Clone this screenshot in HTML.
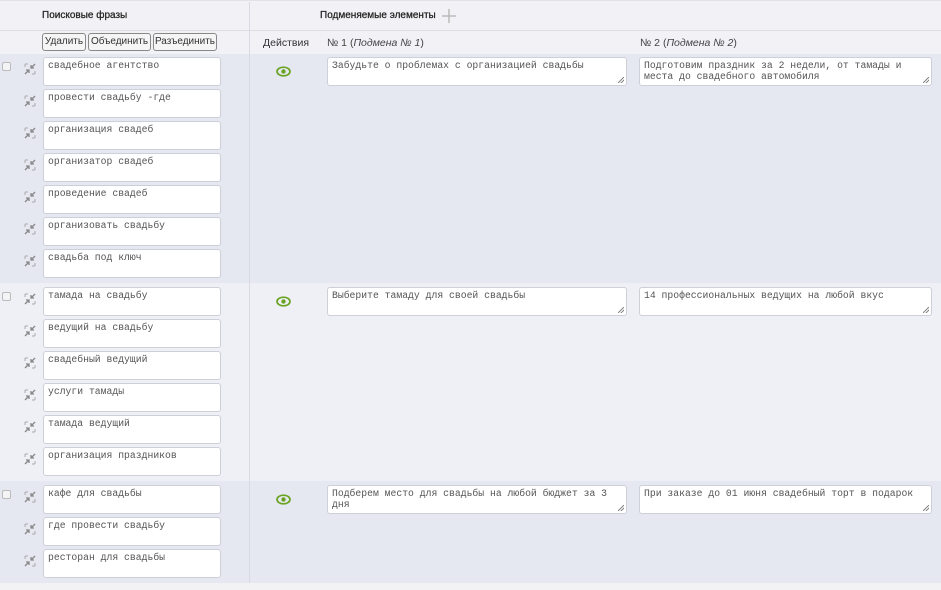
<!DOCTYPE html>
<html><head><meta charset="utf-8"><style>
*{box-sizing:border-box;margin:0;padding:0}
body{width:941px;height:590px;background:#f2f2f5;font-family:"Liberation Sans",sans-serif;position:relative;overflow:hidden;color:#333}
.a{position:absolute}
.hdr{left:0;top:0;width:941px;height:54px;background:#f2f2f6;border-top:1px solid #e2e3ea}
.line{background:#dcdde5}
.g{left:0;width:941px}
.ta{position:absolute;background:#fff;border:1px solid #cdd0d9;border-radius:3px;font-family:"Liberation Mono",monospace;font-size:9.75px;line-height:11px;color:#555;padding:2px 4px;white-space:pre-wrap;overflow:hidden}
.ta.r::after{content:"";position:absolute;right:2px;bottom:2px;width:6px;height:6px;background:linear-gradient(135deg,transparent 45%,#888 45%,#888 55%,transparent 55%,transparent 70%,#888 70%,#888 80%,transparent 80%)}
.cb{position:absolute;left:2px;width:9px;height:9px;border:1px solid #bbb;border-radius:2px;background:#f4f4f6}
.ic{position:absolute;left:24px;width:12px;height:12px}
.btn{position:absolute;top:33px;height:18px;border:1px solid #888;border-radius:3px;background:#f5f5f5;font-size:10px;line-height:16px;text-align:center;color:#333;white-space:nowrap;overflow:hidden}
.eye{position:absolute;left:276px;width:15px;height:11px}
.t{position:absolute;font-size:10.5px;white-space:nowrap}
</style></head><body>
<div class="a hdr"></div>
<div class="a line" style="left:0;top:30px;width:941px;height:1px"></div>
<div class="t" style="left:42px;top:10px;font-size:10px;color:#222;-webkit-text-stroke:0.25px #222">Поисковые фразы</div>
<div class="t" style="left:320px;top:10px;font-size:10px;color:#222;-webkit-text-stroke:0.25px #222">Подменяемые элементы</div>
<svg class="a" style="left:442px;top:9px" width="14" height="14"><path d="M7 0V14M0 7H14" stroke="#bbb" stroke-width="1.5"/></svg>
<div class="btn" style="left:42px;width:44px">Удалить</div>
<div class="btn" style="left:88px;width:63px">Объединить</div>
<div class="btn" style="left:153px;width:64px">Разъединить</div>
<div class="t" style="left:263px;top:37px">Действия</div>
<div class="t" style="left:327px;top:37px;color:#444">№ 1 (<i>Подмена № 1</i>)</div>
<div class="t" style="left:640px;top:37px;color:#444">№ 2 (<i>Подмена № 2</i>)</div>

<div class="a g" style="top:54px;height:229px;background:#e5e8f1"></div>
<div class="a g" style="top:283px;height:198px;background:#eff0f5"></div>
<div class="a g" style="top:481px;height:102px;background:#e5e8f1"></div>
<div class="a line" style="left:249px;top:2px;width:1px;height:581px;background:#d8dae3"></div>

<div class="cb" style="top:62px"></div><div class="cb" style="top:292px"></div><div class="cb" style="top:490px"></div>

<svg width="0" height="0" style="position:absolute"><defs><g id="m"><path d="M1 11L5 7M2 7H5V10M11 1L7 5M7 2V5H10" stroke="#888" stroke-width="1.3" fill="none"/><path d="M1 1H4M1 1V4M11 11H8M11 11V8" stroke="#aaa" stroke-width="1" fill="none"/></g>
<g id="e"><ellipse cx="7.5" cy="5.5" rx="6.5" ry="4.3" fill="none" stroke="#6aa322" stroke-width="1.7"/><circle cx="7.5" cy="5.5" r="2.2" fill="#6aa322"/></g></defs></svg>

<div class="ta" style="left:43px;top:57px;width:178px;height:29px">свадебное агентство</div>
<div class="ta" style="left:43px;top:89px;width:178px;height:29px">провести свадьбу -где</div>
<div class="ta" style="left:43px;top:121px;width:178px;height:29px">организация свадеб</div>
<div class="ta" style="left:43px;top:153px;width:178px;height:29px">организатор свадеб</div>
<div class="ta" style="left:43px;top:185px;width:178px;height:29px">проведение свадеб</div>
<div class="ta" style="left:43px;top:217px;width:178px;height:29px">организовать свадьбу</div>
<div class="ta" style="left:43px;top:249px;width:178px;height:29px">свадьба под ключ</div>
<div class="ta" style="left:43px;top:287px;width:178px;height:29px">тамада на свадьбу</div>
<div class="ta" style="left:43px;top:319px;width:178px;height:29px">ведущий на свадьбу</div>
<div class="ta" style="left:43px;top:351px;width:178px;height:29px">свадебный ведущий</div>
<div class="ta" style="left:43px;top:383px;width:178px;height:29px">услуги тамады</div>
<div class="ta" style="left:43px;top:415px;width:178px;height:29px">тамада ведущий</div>
<div class="ta" style="left:43px;top:447px;width:178px;height:29px">организация праздников</div>
<div class="ta" style="left:43px;top:485px;width:178px;height:29px">кафе для свадьбы</div>
<div class="ta" style="left:43px;top:517px;width:178px;height:29px">где провести свадьбу</div>
<div class="ta" style="left:43px;top:549px;width:178px;height:29px">ресторан для свадьбы</div>

<svg class="ic" style="top:63px"><use href="#m"/></svg>
<svg class="ic" style="top:95px"><use href="#m"/></svg>
<svg class="ic" style="top:127px"><use href="#m"/></svg>
<svg class="ic" style="top:159px"><use href="#m"/></svg>
<svg class="ic" style="top:191px"><use href="#m"/></svg>
<svg class="ic" style="top:223px"><use href="#m"/></svg>
<svg class="ic" style="top:255px"><use href="#m"/></svg>
<svg class="ic" style="top:293px"><use href="#m"/></svg>
<svg class="ic" style="top:325px"><use href="#m"/></svg>
<svg class="ic" style="top:357px"><use href="#m"/></svg>
<svg class="ic" style="top:389px"><use href="#m"/></svg>
<svg class="ic" style="top:421px"><use href="#m"/></svg>
<svg class="ic" style="top:453px"><use href="#m"/></svg>
<svg class="ic" style="top:491px"><use href="#m"/></svg>
<svg class="ic" style="top:523px"><use href="#m"/></svg>
<svg class="ic" style="top:555px"><use href="#m"/></svg>

<svg class="eye" style="top:66px"><use href="#e"/></svg>
<svg class="eye" style="top:296px"><use href="#e"/></svg>
<svg class="eye" style="top:494px"><use href="#e"/></svg>

<div class="ta r" style="left:327px;top:57px;width:300px;height:29px">Забудьте о проблемах с организацией свадьбы</div>
<div class="ta r" style="left:639px;top:57px;width:293px;height:29px">Подготовим праздник за 2 недели, от тамады и места до свадебного автомобиля</div>
<div class="ta r" style="left:327px;top:287px;width:300px;height:29px">Выберите тамаду для своей свадьбы</div>
<div class="ta r" style="left:639px;top:287px;width:293px;height:29px">14 профессиональных ведущих на любой вкус</div>
<div class="ta r" style="left:327px;top:485px;width:300px;height:29px">Подберем место для свадьбы на любой бюджет за 3 дня</div>
<div class="ta r" style="left:639px;top:485px;width:293px;height:29px">При заказе до 01 июня свадебный торт в подарок</div>
</body></html>
